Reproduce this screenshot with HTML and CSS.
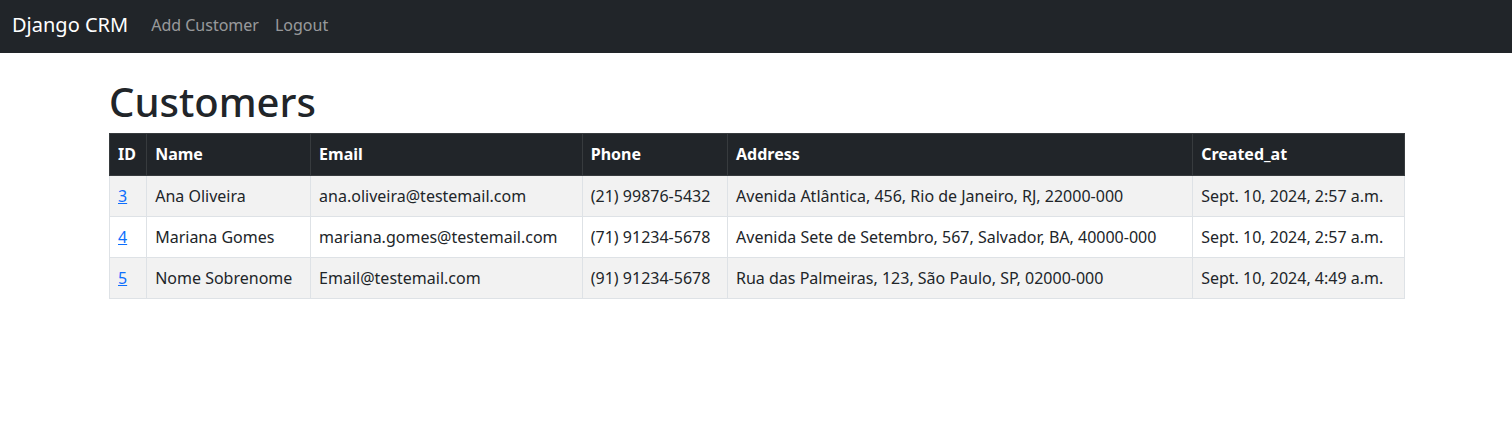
FILE: index.html
```html
<!DOCTYPE html>
<html lang="en">
<head>
<meta charset="utf-8">
<title>Django CRM</title>
<link rel="stylesheet" href="styles.css">
</head>
<body>
<nav class="navbar">
  <a class="brand" href="#">Django CRM</a>
  <ul class="nav">
    <li><a class="nav-link" href="#">Add Customer</a></li>
    <li><a class="nav-link" href="#">Logout</a></li>
  </ul>
</nav>
<main class="container">
  <h1 class="title">Customers</h1>
  <table class="table">
    <thead>
      <tr>
        <th>ID</th>
        <th>Name</th>
        <th>Email</th>
        <th>Phone</th>
        <th>Address</th>
        <th>Created_at</th>
      </tr>
    </thead>
    <tbody>
      <tr>
        <td><a href="#">3</a></td>
        <td>Ana Oliveira</td>
        <td>ana.oliveira@testemail.com</td>
        <td>(21) 99876-5432</td>
        <td>Avenida Atlântica, 456, Rio de Janeiro, RJ, 22000-000</td>
        <td>Sept. 10, 2024, 2:57 a.m.</td>
      </tr>
      <tr>
        <td><a href="#">4</a></td>
        <td>Mariana Gomes</td>
        <td>mariana.gomes@testemail.com</td>
        <td>(71) 91234-5678</td>
        <td>Avenida Sete de Setembro, 567, Salvador, BA, 40000-000</td>
        <td>Sept. 10, 2024, 2:57 a.m.</td>
      </tr>
      <tr>
        <td><a href="#">5</a></td>
        <td>Nome Sobrenome</td>
        <td>Email@testemail.com</td>
        <td>(91) 91234-5678</td>
        <td>Rua das Palmeiras, 123, São Paulo, SP, 02000-000</td>
        <td>Sept. 10, 2024, 4:49 a.m.</td>
      </tr>
    </tbody>
  </table>
</main>
</body>
</html>
```
FILE: styles.css
```css
* { box-sizing: border-box; }
html, body { margin: 0; padding: 0; }
body {
  font-family: "Noto Sans", "Liberation Sans", sans-serif;
  font-size: 16px;
  line-height: 1.5;
  color: #212529;
  background: #fff;
}
.navbar {
  display: flex;
  align-items: center;
  background: #212529;
  height: 53px;
  padding: 0 12px 4px;
}
.brand {
  color: #fff;
  font-size: 20px;
  line-height: 30px;
  text-decoration: none;
  margin-right: 15px;
}
.nav {
  display: flex;
  list-style: none;
  margin: 0;
  padding: 0;
}
.nav-link {
  display: block;
  padding: 8px;
  color: rgba(255,255,255,0.55);
  text-decoration: none;
}
.container {
  max-width: 1320px;
  margin: 0 auto;
  padding: 25px 11px 0 13px;
}
.title {
  font-size: 40px;
  font-weight: 500;
  line-height: 1.2;
  margin: 0 0 7px;
}
.table {
  width: 100%;
  border-collapse: collapse;
  margin-bottom: 16px;
}
.table th, .table td {
  text-align: left;
  padding: 8px;
  border: 1px solid #dee2e6;
  vertical-align: top;
}
.table thead th {
  background: #212529;
  color: #fff;
  font-weight: 700;
  border-color: #373b3e;
  padding: 8px 8px 9px;
}
.table tbody tr:nth-child(odd) td { background: #f2f2f2; }
.table a { color: #0d6efd; }
```
